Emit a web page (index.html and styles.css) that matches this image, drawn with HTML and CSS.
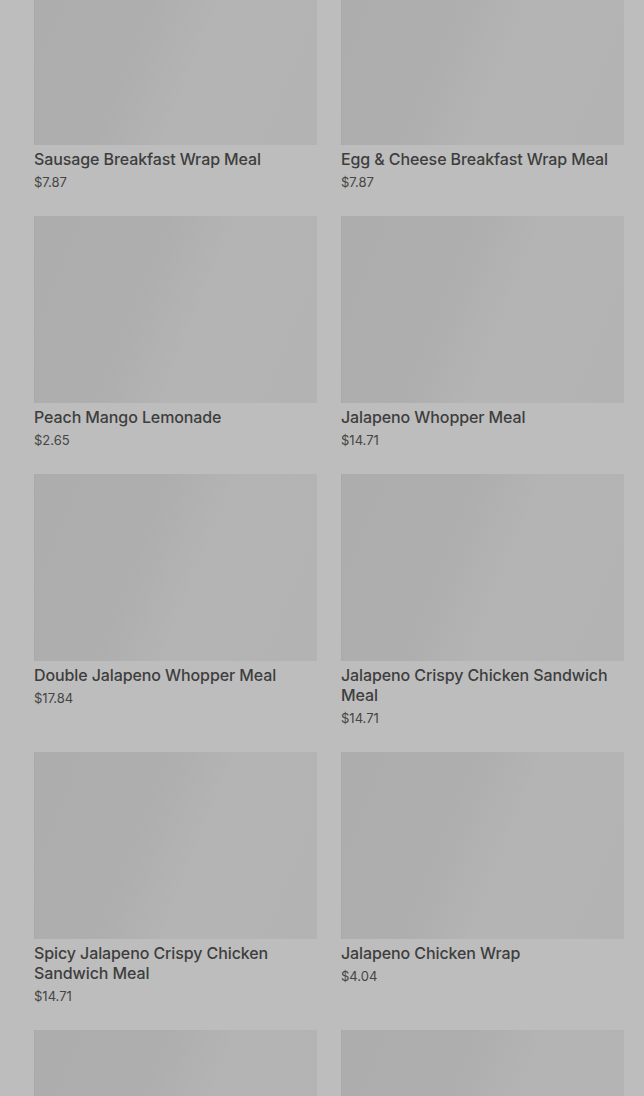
FILE: index.html
```html
<!DOCTYPE html>
<html>
<head>
<meta charset="utf-8">
<link rel="stylesheet" href="styles.css">
</head>
<body>
<main class="grid">
  <div class="card"><div class="img"></div><div class="title">Sausage Breakfast Wrap Meal</div><div class="price">$7.87</div></div>
  <div class="card"><div class="img"></div><div class="title">Egg &amp; Cheese Breakfast Wrap Meal</div><div class="price">$7.87</div></div>
  <div class="card"><div class="img"></div><div class="title">Peach Mango Lemonade</div><div class="price">$2.65</div></div>
  <div class="card"><div class="img"></div><div class="title">Jalapeno Whopper Meal</div><div class="price">$14.71</div></div>
  <div class="card"><div class="img"></div><div class="title">Double Jalapeno Whopper Meal</div><div class="price">$17.84</div></div>
  <div class="card"><div class="img"></div><div class="title">Jalapeno Crispy Chicken Sandwich Meal</div><div class="price">$14.71</div></div>
  <div class="card"><div class="img"></div><div class="title">Spicy Jalapeno Crispy Chicken Sandwich Meal</div><div class="price">$14.71</div></div>
  <div class="card"><div class="img"></div><div class="title">Jalapeno Chicken Wrap</div><div class="price">$4.04</div></div>
  <div class="card"><div class="img"></div></div>
  <div class="card"><div class="img"></div></div>
</main>
</body>
</html>
```
FILE: styles.css
```css
html, body {
  margin: 0;
  padding: 0;
  background: #bdbdbd;
  overflow: hidden;
}
body {
  font-family: Inter, Roboto, "Liberation Sans", sans-serif;
  color: #3c3c3c;
}
.grid {
  display: grid;
  grid-template-columns: 283px 283px;
  column-gap: 24px;
  row-gap: 25px;
  padding: 0 20px 0 34px;
  margin-top: -42px;
  align-items: start;
}
.card {
  display: flex;
  flex-direction: column;
}
.img {
  height: 187px;
  background: linear-gradient(112deg, #adadad 0%, #aeaeae 38%, #b4b4b4 58%, #b3b3b3 100%);
  box-shadow: inset 1px 0 0 #a9a9a9;
}
.title {
  margin-top: 4px;
  font-size: 16px;
  line-height: 20px;
  font-weight: 500;
  letter-spacing: -0.1px;
  color: #3e3e3e;
}
.price {
  margin-top: 4px;
  font-size: 13px;
  line-height: 18px;
  color: #454545;
}
```
